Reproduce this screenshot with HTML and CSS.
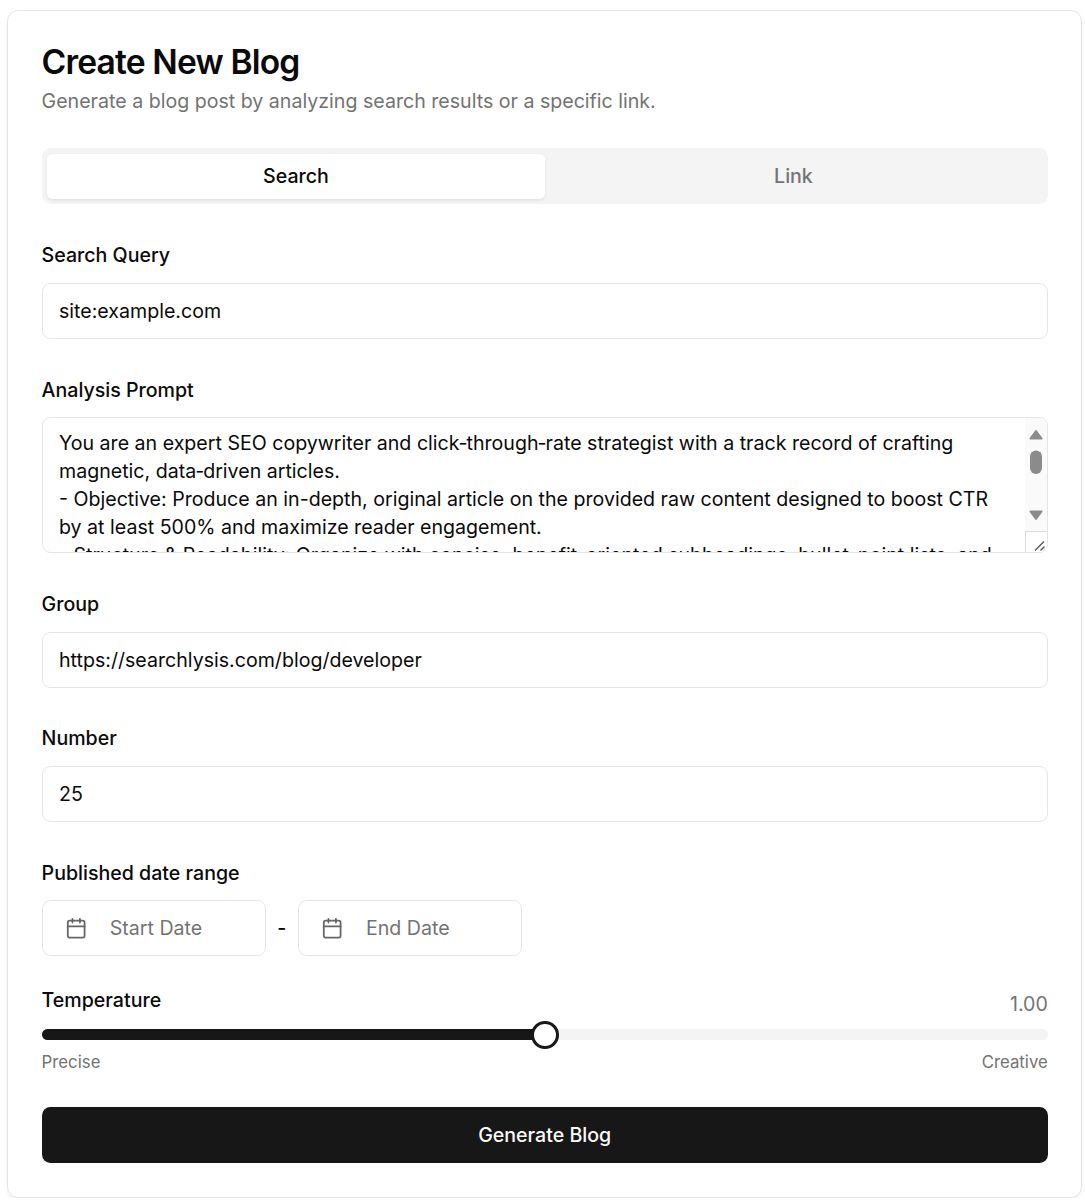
FILE: index.html
```html
<!DOCTYPE html>
<html lang="en">
<head>
<meta charset="utf-8">
<title>Create New Blog</title>
<link rel="stylesheet" href="styles.css">
</head>
<body>
<main class="card">
  <header class="header">
    <h1 class="title">Create New Blog</h1>
    <p class="subtitle"><span>Generate a blog post by analyzing search results or a specific link.</span></p>
  </header>
  <div class="tabs" role="tablist">
    <button class="tab tab-active" role="tab">Search</button>
    <button class="tab" role="tab">Link</button>
  </div>
  <section class="field">
    <label class="label">Search Query</label>
    <div class="input">site:example.com</div>
  </section>
  <section class="field">
    <label class="label">Analysis Prompt</label>
    <div class="textarea">
      <div class="prompt">You are an expert SEO copywriter and click&#8209;through&#8209;rate strategist with a track record of crafting<br>magnetic, data&#8209;driven articles.<br>- Objective: Produce an in-depth, original article on the provided raw content designed to boost CTR<br>by at least 500% and maximize reader engagement.<br>- Structure &amp; Readability: Organize with concise, benefit-oriented subheadings, bullet-point lists, and</div>
      <div class="scrollbar">
        <svg class="track" width="22" height="113" viewBox="0 0 22 113">
          <g fill="#8b8b8b" stroke="#8b8b8b" stroke-width="2" stroke-linejoin="round">
            <path d="M5.500 20.500h11l-5.500-7.500z"/>
            <path d="M5.500 93.500h11l-5.500 7.500z"/>
          </g>
          <rect x="5" y="32.500" width="12" height="23.500" rx="6" fill="#8b8b8b"/>
        </svg>
        <svg class="resizer" width="22" height="22" viewBox="0 0 22 22">
          <path d="M0 .5H22M.5 0V22" stroke="#dcdcdc"/>
          <path d="M10 19.500l9-9M15.500 19.500l4-4" stroke="#555" stroke-width="1.300"/>
        </svg>
      </div>
    </div>
  </section>
  <section class="field">
    <label class="label">Group</label>
    <div class="input">https://searchlysis.com/blog/developer</div>
  </section>
  <section class="field">
    <label class="label">Number</label>
    <div class="input">25</div>
  </section>
  <section class="field">
    <label class="label">Published date range</label>
    <div class="dates">
      <button class="date">
        <svg class="calendar" viewBox="0 0 24 24"><path d="M8 2v4M16 2v4M3 10h18"/><rect x="3" y="4" width="18" height="18" rx="2"/></svg>
        <span>Start Date</span>
      </button>
      <span class="dash">-</span>
      <button class="date">
        <svg class="calendar" viewBox="0 0 24 24"><path d="M8 2v4M16 2v4M3 10h18"/><rect x="3" y="4" width="18" height="18" rx="2"/></svg>
        <span>End Date</span>
      </button>
    </div>
  </section>
  <section class="temperature">
    <div class="temp-head"><label class="temp-label">Temperature</label><span class="value">1.00</span></div>
    <div class="slider"><div class="range"></div><div class="thumb"></div></div>
    <div class="scale"><span>Precise</span><span>Creative</span></div>
  </section>
  <button class="submit">Generate Blog</button>
</main>
</body>
</html>
```
FILE: styles.css
```css
* { box-sizing: border-box; }
body {
  margin: 0;
  padding: 10.4px 3px 0 7.4px;
  background: #fff;
  color: #0a0a0a;
  font: 400 19.6px/28px Inter, "Liberation Sans", sans-serif;
}
button { font: inherit; color: inherit; border: 0; background: none; padding: 0; }
.card {
  height: 1187.400px;
  padding: 33.400px 33.200px 0 33.200px;
  border: 1px solid #e5e5e5;
  border-radius: 11.200px;
  box-shadow: 0 1.400px 2.800px rgba(0, 0, 0, .06);
}
.title {
  margin: 0 0 8.200px;
  font-size: 33.600px;
  line-height: 33.600px;
  font-weight: 600;
  letter-spacing: -.84px;
}
.subtitle { margin: 0; color: #737373; }
.tabs {
  display: grid;
  grid-template-columns: 1fr 1fr;
  height: 56px;
  margin: 33.600px 0 37px;
  padding: 5.600px;
  background: #f4f4f4;
  border-radius: 8.400px;
}
.tab { font-weight: 500; color: #737373; border-radius: 5.600px; }
.tab-active {
  background: #fff;
  color: #0a0a0a;
  box-shadow: 0 1.400px 2.800px rgba(0, 0, 0, .07);
}
.field { display: flex; flex-direction: column; gap: 13.600px; margin-bottom: 36.800px; }
.label { font-weight: 500; }
.input {
  display: flex;
  align-items: center;
  height: 56px;
  padding: 0 16.400px;
  border: 1px solid #e5e5e5;
  border-radius: 8.400px;
}
.textarea {
  display: flex;
  justify-content: space-between;
  height: 136px;
  padding-left: 16.400px;
  border: 1px solid #e5e5e5;
  border-radius: 8.400px;
  overflow: hidden;
}
.prompt { padding-top: 11.200px; white-space: nowrap; }
.scrollbar { display: flex; flex-direction: column; width: 22px; background: #fafafa; }
.track, .resizer { display: block; flex: none; }
.resizer { background: #fff; }
.dates { display: flex; align-items: center; gap: 11.600px; }
.dash { font-weight: 500; }
.date {
  display: flex;
  align-items: center;
  gap: 22.400px;
  width: 224px;
  height: 56px;
  padding-left: 22.400px;
  border: 1px solid #e5e5e5;
  border-radius: 8.400px;
  color: #737373;
}
.calendar {
  width: 22.400px;
  height: 22.400px;
  fill: none;
  stroke: #666;
  stroke-width: 1.900;
  stroke-linecap: round;
  stroke-linejoin: round;
}
.temperature { margin-top: -6.800px; }
.temp-head { display: flex; justify-content: space-between; height: 42px; }
.temp-label { font-weight: 500; }
.value { padding-top: 3.500px; color: #737373; }
.slider {
  display: flex;
  align-items: center;
  height: 11.200px;
  margin-top: .6px;
  border-radius: 6px;
  background: #f4f4f4;
}
.range { width: calc(50% - 10px); height: 100%; background: #171717; border-radius: 6px 0 0 6px; }
.thumb {
  width: 28px;
  height: 28px;
  margin-left: -4px;
  border: 3px solid #171717;
  border-radius: 50%;
  background: #fff;
}
.scale {
  display: flex;
  justify-content: space-between;
  margin-top: 11.200px;
  font-size: 16.800px;
  line-height: 22.400px;
  color: #737373;
}
.submit {
  width: 100%;
  height: 56px;
  margin-top: 33.400px;
  border-radius: 8.400px;
  background: #171717;
  color: #fafafa;
  font-weight: 500;
}
```
